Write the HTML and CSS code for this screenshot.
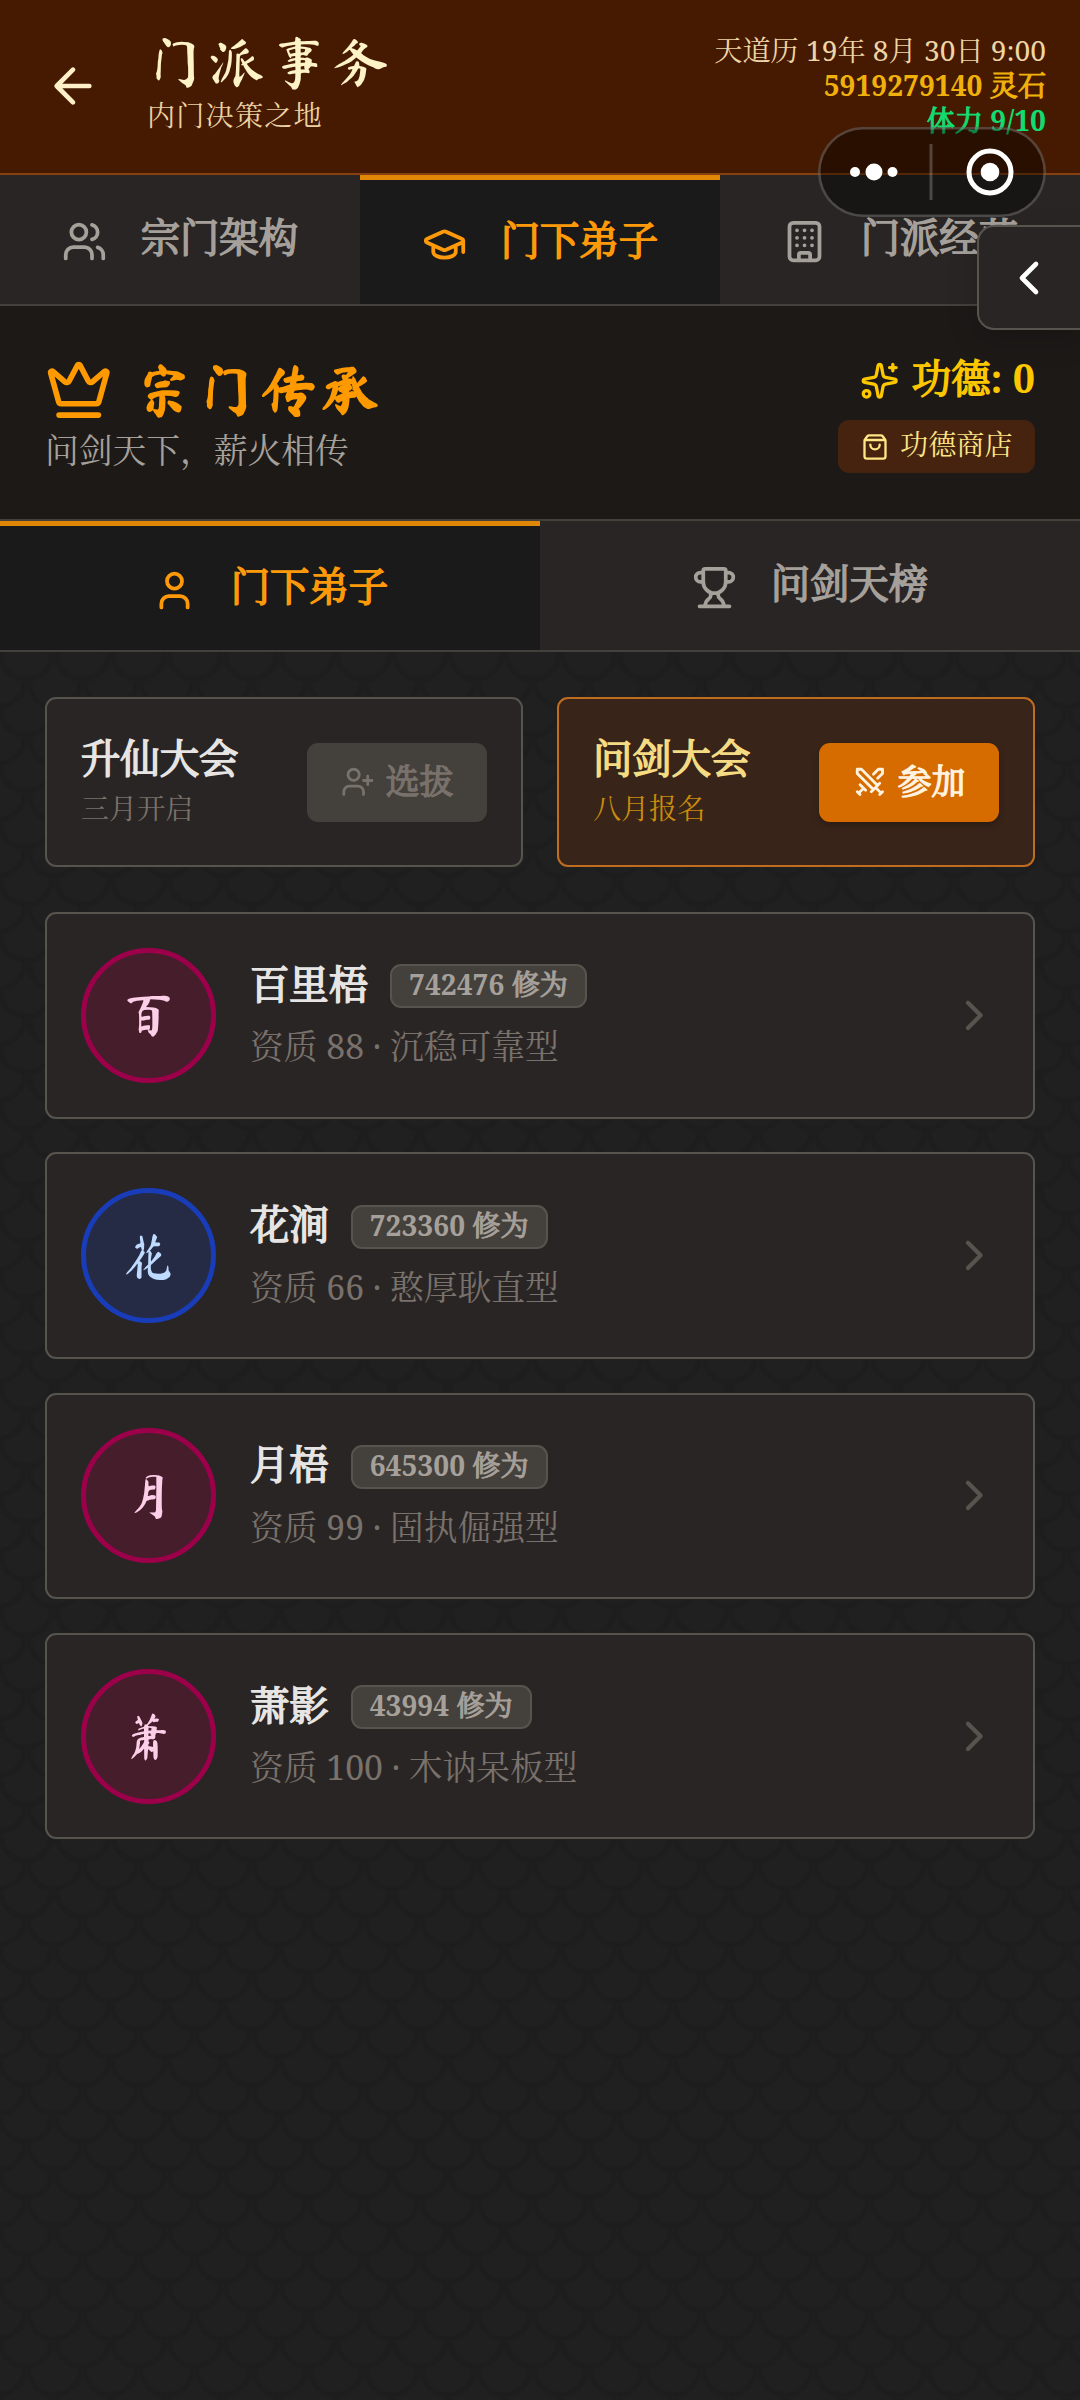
FILE: index.html
```html
<!DOCTYPE html>
<html lang="zh-CN">
<head>
<meta charset="utf-8">
<title>门派事务</title>
<link rel="stylesheet" href="styles.css">
</head>
<body>
<svg class="sprite" aria-hidden="true">
  <symbol id="arrow-left" viewBox="0 0 24 24"><path d="m12 19-7-7 7-7M19 12H5"/></symbol>
  <symbol id="users" viewBox="0 0 24 24"><path d="M16 21v-2a4 4 0 0 0-4-4H6a4 4 0 0 0-4 4v2M22 21v-2a4 4 0 0 0-3-3.87M16 3.13a4 4 0 0 1 0 7.75"/><circle cx="9" cy="7" r="4"/></symbol>
  <symbol id="cap" viewBox="0 0 24 24"><path d="M21.42 10.922a1 1 0 0 0-.019-1.838L12.83 5.18a2 2 0 0 0-1.66 0L2.6 9.08a1 1 0 0 0 0 1.832l8.57 3.908a2 2 0 0 0 1.66 0zM22 10v6M6 12.5V16a6 3 0 0 0 12 0v-3.5"/></symbol>
  <symbol id="building" viewBox="0 0 24 24"><rect x="4" y="2" width="16" height="20" rx="2"/><path d="M9 22v-3a1 1 0 0 1 1-1h4a1 1 0 0 1 1 1v3M8 6h.01M12 6h.01M16 6h.01M8 10h.01M12 10h.01M16 10h.01M8 14h.01M12 14h.01M16 14h.01"/></symbol>
  <symbol id="crown" viewBox="0 0 24 24"><path d="M11.562 3.266a.5.5 0 0 1 .876 0L15.39 8.87a1 1 0 0 0 1.516.294L21.183 5.5a.5.5 0 0 1 .798.519l-2.834 10.246a1 1 0 0 1-.956.734H5.81a1 1 0 0 1-.957-.734L2.02 6.02a.5.5 0 0 1 .798-.519l4.276 3.664a1 1 0 0 0 1.516-.294zM5 21h14"/></symbol>
  <symbol id="sparkles" viewBox="0 0 24 24"><path d="M11.017 2.814a1 1 0 0 1 1.966 0l1.051 5.558a2 2 0 0 0 1.594 1.594l5.558 1.051a1 1 0 0 1 0 1.966l-5.558 1.051a2 2 0 0 0-1.594 1.594l-1.051 5.558a1 1 0 0 1-1.966 0l-1.051-5.558a2 2 0 0 0-1.594-1.594l-5.558-1.051a1 1 0 0 1 0-1.966l5.558-1.051a2 2 0 0 0 1.594-1.594zM20 2v4M22 4h-4"/><circle cx="4" cy="20" r="2"/></symbol>
  <symbol id="bag" viewBox="0 0 24 24"><path d="M16 10a4 4 0 0 1-8 0M3.103 6.034h17.794M3.4 5.467a2 2 0 0 0-.4 1.2V20a2 2 0 0 0 2 2h14a2 2 0 0 0 2-2V6.667a2 2 0 0 0-.4-1.2l-2-2.667A2 2 0 0 0 17 2H7a2 2 0 0 0-1.6.8z"/></symbol>
  <symbol id="user" viewBox="0 0 24 24"><path d="M19 21v-2a4 4 0 0 0-4-4H9a4 4 0 0 0-4 4v2"/><circle cx="12" cy="7" r="4"/></symbol>
  <symbol id="trophy" viewBox="0 0 24 24"><path d="M10 14.66v1.626a2 2 0 0 1-.976 1.696A5 5 0 0 0 7 21.978M14 14.66v1.626a2 2 0 0 0 .976 1.696A5 5 0 0 1 17 21.978M18 9h1.5a1 1 0 0 0 0-5H18M4 22h16M6 9a6 6 0 0 0 12 0V3a1 1 0 0 0-1-1H7a1 1 0 0 0-1 1zM6 9H4.5a1 1 0 0 1 0-5H6"/></symbol>
  <symbol id="user-plus" viewBox="0 0 24 24"><path d="M16 21v-2a4 4 0 0 0-4-4H6a4 4 0 0 0-4 4v2M19 8v6M22 11h-6"/><circle cx="9" cy="7" r="4"/></symbol>
  <symbol id="swords" viewBox="0 0 24 24"><path d="M14.5 17.5 3 6V3h3l11.5 11.5M13 19l6-6M16 16l4 4M19 21l2-2M14.5 6.5 18 3h3v3l-3.5 3.5M5 14l4 4M7 17l-3 3M3 19l2 2"/></symbol>
  <symbol id="chevron-right" viewBox="0 0 24 24"><path d="m9 18 6-6-6-6"/></symbol>
  <symbol id="chevron-left" viewBox="0 0 24 24"><path d="m15 18-6-6 6-6"/></symbol>
</svg>

<header class="topbar">
  <svg class="icon icon-back"><use href="#arrow-left"/></svg>
  <div class="topbar-title">
    <h1 class="brush">门派事务</h1>
    <p>内门决策之地</p>
  </div>
  <div class="status">
    <div class="date">天道历 19年 8月 30日 9:00</div>
    <div class="stones bold"><span class="num">5919279140 </span>灵石</div>
    <div class="stamina bold">体力<span class="num"> 9/10</span></div>
  </div>
</header>

<nav class="tabs tabs-3">
  <div class="tab bold"><svg class="icon"><use href="#users"/></svg><span>宗门架构</span></div>
  <div class="tab bold active"><svg class="icon"><use href="#cap"/></svg><span>门下弟子</span></div>
  <div class="tab bold"><svg class="icon"><use href="#building"/></svg><span>门派经营</span></div>
</nav>

<section class="legacy">
  <div class="legacy-main">
    <h2 class="brush"><svg class="icon icon-crown"><use href="#crown"/></svg><span>宗门传承</span></h2>
    <p>问剑天下，薪火相传</p>
  </div>
  <div class="merit">
    <div class="merit-count bold"><svg class="icon"><use href="#sparkles"/></svg><span class="merit-label">功德<span class="num">: 0</span></span></div>
    <div class="shop"><svg class="icon"><use href="#bag"/></svg><span>功德商店</span></div>
  </div>
</section>

<nav class="tabs tabs-2">
  <div class="tab bold active"><svg class="icon"><use href="#user"/></svg><span>门下弟子</span></div>
  <div class="tab bold"><svg class="icon"><use href="#trophy"/></svg><span>问剑天榜</span></div>
</nav>

<main class="content">
  <div class="events">
    <div class="event">
      <div class="event-text"><h3 class="bold">升仙大会</h3><p>三月开启</p></div>
      <div class="btn bold"><svg class="icon"><use href="#user-plus"/></svg><span>选拔</span></div>
    </div>
    <div class="event open">
      <div class="event-text"><h3 class="bold">问剑大会</h3><p>八月报名</p></div>
      <div class="btn bold"><svg class="icon"><use href="#swords"/></svg><span>参加</span></div>
    </div>
  </div>

  <div class="disciples">
    <div class="disciple">
      <div class="avatar brush">百</div>
      <div class="info">
        <div class="name"><h3 class="bold">百里梧</h3><span class="badge bold"><span class="num">742476 </span>修为</span></div>
        <p>资质 88 · 沉稳可靠型</p>
      </div>
      <svg class="icon icon-go"><use href="#chevron-right"/></svg>
    </div>
    <div class="disciple">
      <div class="avatar blue brush">花</div>
      <div class="info">
        <div class="name"><h3 class="bold">花涧</h3><span class="badge bold"><span class="num">723360 </span>修为</span></div>
        <p>资质 66 · 憨厚耿直型</p>
      </div>
      <svg class="icon icon-go"><use href="#chevron-right"/></svg>
    </div>
    <div class="disciple">
      <div class="avatar brush">月</div>
      <div class="info">
        <div class="name"><h3 class="bold">月梧</h3><span class="badge bold"><span class="num">645300 </span>修为</span></div>
        <p>资质 99 · 固执倔强型</p>
      </div>
      <svg class="icon icon-go"><use href="#chevron-right"/></svg>
    </div>
    <div class="disciple">
      <div class="avatar brush">萧</div>
      <div class="info">
        <div class="name"><h3 class="bold">萧影</h3><span class="badge bold"><span class="num">43994 </span>修为</span></div>
        <p>资质 100 · 木讷呆板型</p>
      </div>
      <svg class="icon icon-go"><use href="#chevron-right"/></svg>
    </div>
  </div>
</main>

<div class="drawer"><svg class="icon"><use href="#chevron-left"/></svg></div>
<div class="capsule">
  <svg viewBox="0 0 228 90" width="228" height="90">
    <circle cx="37" cy="45" r="5"/><circle cx="56" cy="45" r="8.5"/><circle cx="74.5" cy="45" r="5"/>
    <rect class="divider" x="111.5" y="17" width="3" height="56"/>
    <circle class="ring" cx="172" cy="45" r="21"/><circle cx="172" cy="45" r="9.3"/>
  </svg>
</div>
</body>
</html>
```
FILE: styles.css
```css
* { box-sizing: border-box; margin: 0; padding: 0; }

body {
  position: relative;
  width: 1080px;
  height: 2400px;
  overflow: hidden;
  color: #e7e5e4;
  font-family: "Noto Serif", "Noto Serif CJK SC", "Noto Serif SC", "Noto Sans CJK SC", serif;
  background-color: #202020;
  background-image: url("data:image/svg+xml,%3Csvg xmlns='http://www.w3.org/2000/svg' width='56.25' height='56.25' viewBox='0 0 56.25 56.25'%3E%3Cg fill='none' stroke='%231c1c1c'%3E%3Cg id='a' stroke-opacity='.4' stroke-width='7'%3E%3Cpath d='M2 0A26.1 26.1 0 0 0 54.25 0M-26.1 28.1A26.1 26.1 0 0 0 26.1 28.1M30.1 28.1A26.1 26.1 0 0 0 82.4 28.1'/%3E%3C/g%3E%3Cg stroke-opacity='.5' stroke-width='3'%3E%3Cpath d='M2 0A26.1 26.1 0 0 0 54.25 0M-26.1 28.1A26.1 26.1 0 0 0 26.1 28.1M30.1 28.1A26.1 26.1 0 0 0 82.4 28.1'/%3E%3C/g%3E%3C/g%3E%3C/svg%3E");
  background-position: -2px -22px;
}

h1, h2, h3, p { font-weight: 400; }

.sprite { display: none; }

.icon {
  flex: none;
  width: 45px;
  height: 45px;
  fill: none;
  stroke: currentColor;
  stroke-width: 2;
  stroke-linecap: round;
  stroke-linejoin: round;
}

/* Han glyphs are emboldened with an even outline, digits use the real bold face */
.bold { font-weight: 400; -webkit-text-stroke: .04em currentColor; }
.bold .num { font-weight: 700; -webkit-text-stroke: 0; white-space: pre; }
.brush { font-family: "Ma Shan Zheng", "STKaiti", "Noto Serif CJK SC", "Noto Sans CJK SC", serif; }

/* top bar */
.topbar {
  display: flex;
  height: 175px;
  padding: 0 34px 0 45px;
  background: #451a00;
  border-bottom: 2px solid #87400f;
}
.icon-back { width: 56px; height: 56px; margin-top: 58px; color: #fef0c7; }
.topbar-title { flex: 1; margin-left: 46px; padding-top: 32px; }
.topbar-title h1 { font-size: 56.25px; line-height: 60px; letter-spacing: 5.6px; color: #fef3c6; }
.topbar-title p { margin-top: 3px; font-size: 28.125px; line-height: 40px; letter-spacing: 1.2px; color: #ecd1a2; }
.status { padding-top: 33px; text-align: right; font-size: 28.125px; line-height: 35px; white-space: nowrap; }
.status div { height: 35px; }
.date { color: #efd5a5; }
.stones { color: #f0b10c; }
.stamina { color: #12dc70; }

/* tab strips */
.tabs { display: grid; height: 131px; background: #292524; border-bottom: 2px solid #44403c; }
.tabs-3 { grid-template-columns: repeat(3, 1fr); }
.tabs-2 { grid-template-columns: repeat(2, 1fr); }
.tab {
  display: flex;
  align-items: center;
  justify-content: center;
  gap: 33.75px;
  padding-top: 3px;
  color: #a6a09b;
  font-size: 39.375px;
  line-height: 56px;
}
.tab span { padding-bottom: 9px; }
.tab.active { padding-top: 4px; color: #fe9a0a; background: #1a1a1a; border-top: 5px solid #e08805; }

/* legacy banner */
.legacy {
  display: flex;
  justify-content: space-between;
  height: 215px;
  padding: 45px;
  background: #1c1917;
  border-bottom: 2px solid #44403a;
}
.legacy h2 { display: flex; align-items: center; gap: 24px; height: 78px; font-size: 56.25px; line-height: 60px; letter-spacing: 5.6px; font-weight: 700; color: #fe9a00; }
.icon-crown { width: 67.5px; height: 67.5px; }
.legacy p { margin-top: 1px; font-size: 33.75px; line-height: 40px; color: #a6a09b; }
.merit { display: flex; flex-direction: column; align-items: flex-end; }
.merit-count { display: flex; align-items: center; gap: 12px; height: 60px; font-size: 39.375px; line-height: 56px; color: #fdc700; }
.merit-count .icon { width: 39.4px; height: 39.4px; }
.merit-label { padding-bottom: 7px; }
.shop {
  display: flex;
  align-items: center;
  gap: 11.5px;
  height: 53px;
  margin-top: 9px;
  padding: 0 22.5px;
  border-radius: 11px;
  background: #46230f;
  color: #fee685;
  font-size: 28.125px;
  line-height: 40px;
}
.shop .icon { width: 28px; height: 28px; }
.shop span { padding-bottom: 5px; }

/* events */
.content { padding: 45px; }
.events { display: grid; grid-template-columns: 1fr 1fr; gap: 33.75px; }
.event {
  display: flex;
  align-items: center;
  justify-content: space-between;
  height: 170px;
  padding: 0 34px;
  background: #292524;
  border: 2px solid #57534d;
  border-radius: 11px;
}
.event-text { padding-bottom: 7px; }
.event h3 { font-size: 39.375px; line-height: 56px; }
.event p { margin-top: 2px; font-size: 28.125px; line-height: 40px; color: #79716b; }
.btn {
  display: flex;
  align-items: center;
  gap: 11.25px;
  height: 79px;
  padding: 0 33.75px;
  border-radius: 11px;
  background: #44403b;
  color: #79716b;
  font-size: 33.75px;
  line-height: 50px;
}
.btn .icon { width: 33.75px; height: 33.75px; }
.btn span { padding-bottom: 3px; }
.event.open { background: #382419; border-color: #c06d20; }
.open h3 { color: #f5db83; }
.open p { color: #c98c0c; }
.open .btn { background: #d66b00; color: #fff3e0; box-shadow: 0 3px 6px rgba(0, 0, 0, .25); }

/* disciples */
.disciples { display: flex; flex-direction: column; gap: 33.75px; margin-top: 45px; }
.disciple {
  display: flex;
  align-items: center;
  height: 206.5px;
  padding: 0 33px 0 34px;
  background: #292524;
  border: 2px solid #57534d;
  border-radius: 11px;
}
.avatar {
  display: flex;
  align-items: center;
  justify-content: center;
  width: 135px;
  height: 135px;
  border: 5px solid #9d004b;
  border-radius: 50%;
  background: #451d2b;
  color: #fccee8;
  font-size: 50.6px;
  line-height: 60px;
}
.avatar.blue { border-color: #193cb8; background: #262b45; color: #bedbff; }
.info { flex: 1; margin-left: 34px; }
.name { display: flex; align-items: center; gap: 22px; height: 56px; }
.name h3 { padding-bottom: 3px; font-size: 39.375px; line-height: 56px; }
.badge {
  height: 44px;
  margin-top: 2px;
  padding: 0 17px;
  border: 2px solid #57534d;
  border-radius: 11px;
  background: #44403b;
  color: #a6a09b;
  font-size: 28.125px;
  line-height: 37px;
}
.info p { margin-top: 8px; padding-bottom: 2px; font-size: 33.75px; line-height: 50px; color: #79716b; }
.icon-go { width: 50.6px; height: 50.6px; color: #57534d; }

/* floating overlays */
.drawer {
  position: absolute;
  top: 225px;
  right: -2px;
  display: flex;
  align-items: center;
  width: 105px;
  height: 105px;
  padding-left: 22px;
  background: #292524;
  border: 2px solid #57534d;
  border-radius: 17px 0 0 17px;
  box-shadow: 0 10px 30px rgba(0, 0, 0, .15);
  color: #fff;
}
.drawer .icon { width: 56px; height: 56px; }
.capsule {
  position: absolute;
  top: 127px;
  left: 818px;
  width: 228px;
  height: 90px;
  border-radius: 45px;
  background: rgba(0, 0, 0, .4);
  box-shadow: inset 0 0 0 2.5px rgba(255, 255, 255, .22);
}
.capsule svg { display: block; fill: #fff; }
.capsule .divider { fill: rgba(255, 255, 255, .22); }
.capsule .ring { fill: none; stroke: #fff; stroke-width: 5; }
```
